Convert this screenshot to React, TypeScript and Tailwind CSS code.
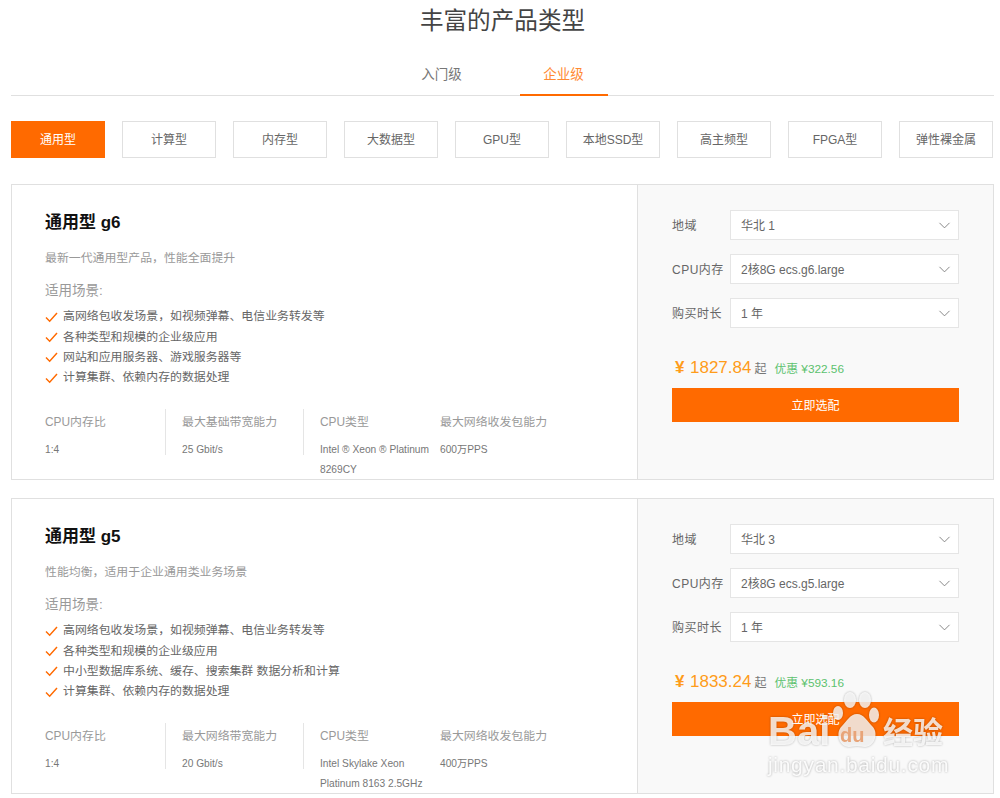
import { ChevronDown } from "lucide-react";

const filters = ["通用型", "计算型", "内存型", "大数据型", "GPU型", "本地SSD型", "高主频型", "FPGA型", "弹性裸金属"];

const products = [
  {
    name: "通用型 g6",
    desc: "最新一代通用型产品，性能全面提升",
    scenes: ["高网络包收发场景，如视频弹幕、电信业务转发等", "各种类型和规模的企业级应用", "网站和应用服务器、游戏服务器等", "计算集群、依赖内存的数据处理"],
    bandLabel: "最大基础带宽能力",
    band: "25 Gbit/s",
    cpu: ["Intel ® Xeon ® Platinum", "8269CY"],
    pps: "600万PPS",
    region: "华北 1",
    spec: "2核8G ecs.g6.large",
    price: "1827.84",
    off: "¥322.56",
  },
  {
    name: "通用型 g5",
    desc: "性能均衡，适用于企业通用类业务场景",
    scenes: ["高网络包收发场景，如视频弹幕、电信业务转发等", "各种类型和规模的企业级应用", "中小型数据库系统、缓存、搜索集群 数据分析和计算", "计算集群、依赖内存的数据处理"],
    bandLabel: "最大网络带宽能力",
    band: "20 Gbit/s",
    cpu: ["Intel Skylake Xeon", "Platinum 8163 2.5GHz"],
    pps: "400万PPS",
    region: "华北 3",
    spec: "2核8G ecs.g5.large",
    price: "1833.24",
    off: "¥593.16",
  },
];

const Check = () => (
  <svg viewBox="0 0 14 12" className="w-[13px] h-[11px] shrink-0" fill="none" stroke="#ff6a00" strokeWidth="1.6">
    <path d="M1 6l4 4 8-9" />
  </svg>
);

const Field = ({ label, value }: { label: string; value: string }) => (
  <div className="flex items-center h-[30px]">
    <span className="w-[58px] pt-[2px] text-[12px] tracking-[0.5px] text-[#666]">{label}</span>
    <div className="flex-1 h-full flex items-center justify-between pl-[10px] pr-[4px] bg-white border border-[#e5e5e5] text-[12px] text-[#666]">
      <span className="pt-[2px]">{value}</span>
      <ChevronDown className="w-[19px] h-[19px] text-[#777]" strokeWidth={1.1} />
    </div>
  </div>
);

const Metric = ({ label, lines, className }: { label: string; lines: string[]; className: string }) => (
  <div className={className}>
    <div className="text-[11.9px] leading-[18px] text-[#999]">{label}</div>
    <div className="mt-[9px] text-[10.2px] leading-[20px] text-[#777]">
      {lines.map((line) => (
        <div key={line}>{line}</div>
      ))}
    </div>
  </div>
);

const Watermark = () => (
  <div className="absolute left-[768px] top-[692px] w-[190px] h-[88px] text-white/80 pointer-events-none drop-shadow-[0_0_1px_rgba(0,0,0,0.35)]">
    <div className="absolute left-[0px] top-[19px] text-[40px] leading-[40px] font-bold">Bai</div>
    <svg viewBox="0 0 46 56" className="absolute left-[65px] top-[0px] w-[46px] h-[56px]" fill="currentColor">
      <ellipse cx="5" cy="21" rx="5" ry="7" />
      <ellipse cx="17" cy="8" rx="6" ry="8" />
      <ellipse cx="32" cy="8" rx="6" ry="8" />
      <ellipse cx="41" cy="23" rx="5" ry="7.5" />
      <path d="M24 22c-7 0-10 7-15 12-7 6-3 21 7 21 3 0 5-1 8-1s5 1 8 1c10 0 14-15 7-21-5-5-8-12-15-12z" />
    </svg>
    <div className="absolute left-[72px] top-[32px] text-[20px] leading-[22px] font-bold text-[#e8a478]">du</div>
    <div className="absolute left-[115px] top-[24px] text-[30px] leading-[34px] font-bold">经验</div>
    <div className="absolute left-[0px] top-[61px] text-[21px] leading-[24px] tracking-[0.7px] text-white/90">jingyan.baidu.com</div>
  </div>
);

export default function App() {
  return (
    <div className="relative w-[1000px] h-[798px] overflow-hidden bg-white pl-[11px] pr-[6px] font-['Liberation_Sans','Noto_Sans_CJK_SC',sans-serif]">
      <h1 className="h-[42px] text-center text-[23.6px] leading-[42px] font-normal text-[#444]">丰富的产品类型</h1>

      {/* Tabs */}
      <div className="relative mt-[12px] h-[42px] border-b border-[#e0e0e0]">
        <div className="flex justify-center text-[13.5px]">
          <div className="w-[88px] mr-[34px] h-[42px] leading-[41px] text-center text-[#777]">入门级</div>
          <div className="w-[88px] h-[42px] leading-[41px] text-center text-[#ff8a33] border-b-2 border-[#ff6a00]">企业级</div>
        </div>
      </div>

      {/* Filters */}
      <div className="mt-[25px] flex gap-[17px]">
        {filters.map((item, i) => (
          <div
            key={item}
            className={
              i === 0
                ? "w-[94px] h-[37px] leading-[39px] text-center text-[12px] text-white bg-[#ff6a00]"
                : "w-[94px] h-[37px] leading-[37px] text-center text-[12px] text-[#666] border border-[#e0e0e0]"
            }
          >
            {item}
          </div>
        ))}
      </div>

      {/* Products */}
      <div className="mt-[26px] flex flex-col gap-[18px]">
        {products.map((p) => (
          <div key={p.name} className="flex h-[296px] border border-[#e0e0e0]">
            <div className="w-[626px] pl-[33px] pt-[26px] border-r border-[#e0e0e0]">
              <div className="text-[17px] leading-[24px] font-bold text-[#111]">{p.name}</div>
              <div className="mt-[14px] text-[11.9px] leading-[18px] text-[#999]">{p.desc}</div>
              <div className="mt-[14px] text-[13.5px] leading-[20px] text-[#999]">适用场景:</div>
              <ul className="mt-[6px]">
                {p.scenes.map((s) => (
                  <li key={s} className="flex items-center gap-[5px] h-[20.4px] text-[11.9px] text-[#666]">
                    <Check />
                    {s}
                  </li>
                ))}
              </ul>
              <div className="mt-[20px] flex">
                <Metric label="CPU内存比" lines={["1:4"]} className="w-[121px] h-[46px] border-r border-[#e5e5e5] pt-[4px]" />
                <Metric label={p.bandLabel} lines={[p.band]} className="w-[138px] h-[46px] pl-[16px] border-r border-[#e5e5e5] pt-[4px]" />
                <Metric label="CPU类型" lines={p.cpu} className="w-[136px] pl-[16px] pt-[4px]" />
                <Metric label="最大网络收发包能力" lines={[p.pps]} className="pt-[4px]" />
              </div>
            </div>
            <div className="flex-1 bg-[#f9f9f9] pl-[34px] pr-[34px] pt-[25px]">
              <div className="flex flex-col gap-[14px]">
                <Field label="地域" value={p.region} />
                <Field label="CPU内存" value={p.spec} />
                <Field label="购买时长" value="1 年" />
              </div>
              <div className="mt-[26px] h-[26px] pl-[3px] flex items-baseline">
                <span className="w-[15px] text-[17px] leading-[27px] font-bold text-[#ff9c1a]">¥</span>
                <span className="text-[17px] leading-[27px] text-[#ff9c1a]">{p.price}</span>
                <span className="ml-[3px] text-[12px] text-[#777]">起</span>
                <span className="ml-[8px] text-[11.8px] text-[#5cc26e]">优惠 {p.off}</span>
              </div>
              <button className="mt-[8px] w-full h-[34px] pt-[2px] bg-[#ff6a00] text-[12px] text-white">立即选配</button>
            </div>
          </div>
        ))}
      </div>

      <Watermark />
    </div>
  );
}
